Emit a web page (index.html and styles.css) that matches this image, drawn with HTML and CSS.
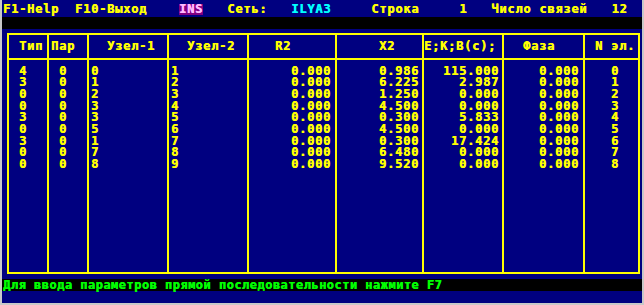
FILE: index.html
```html
<!DOCTYPE html>
<html>
<head>
  <title>Параметры связей</title>
  <link rel="stylesheet" href="styles.css">
</head>
<body>
  <div class="screen">
    <div class="topbar">F1-Help  F10-Выход    <span class="ins">INS</span>   Сеть:   <span class="net">ILYA3</span>     Строка     1   Число связей   12</div>
    <div class="msgline"></div>

    <div class="grid">
      <div class="th c-type">Тип</div>
      <div class="th c-par">Пар</div>
      <div class="th c-n1">Узел-1</div>
      <div class="th c-n2">Узел-2</div>
      <div class="th c-r2">R2</div>
      <div class="th c-x2">X2</div>
      <div class="th c-ekb">E;K;B(c);</div>
      <div class="th c-phase">Фаза</div>
      <div class="th c-num">N эл.</div>

      <div class="td c-type">4<br>3<br>0<br>0<br>3<br>0<br>3<br>0<br>0</div>
      <div class="td c-par">0<br>0<br>0<br>0<br>0<br>0<br>0<br>0<br>0</div>
      <div class="td c-n1">0<br>1<br>2<br>3<br>3<br>5<br>1<br>7<br>8</div>
      <div class="td c-n2">1<br>2<br>3<br>4<br>5<br>6<br>7<br>8<br>9</div>
      <div class="td c-r2 num">0.000<br>0.000<br>0.000<br>0.000<br>0.000<br>0.000<br>0.000<br>0.000<br>0.000</div>
      <div class="td c-x2 num">0.986<br>6.225<br>1.250<br>4.500<br>0.300<br>4.500<br>0.300<br>6.480<br>9.520</div>
      <div class="td c-ekb num">115.000<br>2.987<br>0.000<br>0.000<br>5.833<br>0.000<br>17.424<br>0.000<br>0.000</div>
      <div class="td c-phase num">0.000<br>0.000<br>0.000<br>0.000<br>0.000<br>0.000<br>0.000<br>0.000<br>0.000</div>
      <div class="td c-num">0<br>1<br>2<br>3<br>4<br>5<br>6<br>7<br>8</div>
    </div>

    <div class="status">Для ввода параметров прямой последовательности нажмите F7</div>
  </div>
</body>
</html>
```

FILE: styles.css
```css
body {
  margin: 0;
  background-color: #c8c8c8;
}

/* text-mode screen: 8px character cells */
.screen {
  margin-left: 2px;
  width: 640px;
  height: 303px;
  background-color: #000080;
  color: #ffff00;
  font-family: "DejaVu Sans Mono", monospace;
  font-weight: bold;
  font-size: 12px;
  letter-spacing: 0.78px;
  line-height: 11.67px;
  text-shadow: 0.5px 0 0 currentColor;
}

.topbar {
  height: 17px;
  box-sizing: border-box;
  padding: 3.5px 0 0 1px;
  white-space: pre;
}

.ins {
  display: inline-block;
  background-color: #800080;
  color: #ffb8ff;
}

.net {
  color: #00ffff;
}

.msgline {
  height: 11.5px;
  background-color: #000;
}

.grid {
  display: grid;
  grid-template-columns: 40px 40px 80px 80px 88px 87px 80px 81px 55px;
  grid-template-rows: 25px 1fr;
  width: 631px;
  height: 237px;
  margin: 4.5px 0 0 5px;
  border: 2px solid #ffff00;
  border-left: none;
}

.th, .td {
  border-left: 2px solid #ffff00;
  white-space: nowrap;
}

.th {
  border-bottom: 2px solid #ffff00;
  padding-top: 6px;
}

.td {
  padding-top: 5.5px;
}

.td.num {
  text-align: right;
}

.th.c-type, .td.c-type { padding-left: 10px; }
.th.c-par { padding-left: 2px; }
.td.c-par { padding-left: 10px; }
.th.c-n1, .th.c-n2 { padding-left: 18px; }
.td.c-n1, .td.c-n2 { padding-left: 2px; }
.th.c-r2 { padding-left: 26px; }
.td.c-r2 { padding-right: 4px; }
.th.c-x2 { padding-left: 42px; }
.td.c-x2 { padding-right: 3px; }
.td.c-ekb { padding-right: 3px; }
.th.c-phase { padding-left: 19px; }
.td.c-phase { padding-right: 4px; }
.th.c-num { padding-left: 10px; }
.td.c-num { padding-left: 26px; }

.status {
  height: 12px;
  margin-top: 5px;
  padding-left: 1px;
  background-color: #000;
  color: #00ff00;
  letter-spacing: 0.48px;
  line-height: 12px;
  white-space: pre;
}
```
